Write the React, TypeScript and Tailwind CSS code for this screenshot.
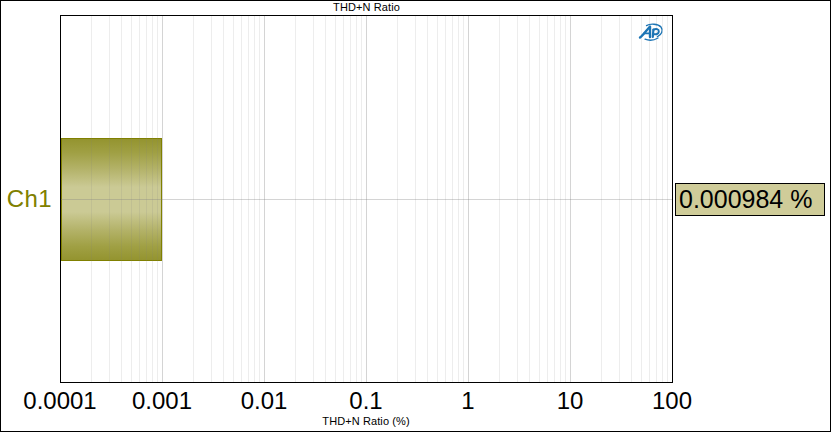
const multipliers = [2, 3, 4, 5, 6, 7, 8, 9];
const decades = [0, 1, 2, 3, 4, 5];
const ticks = ["0.0001", "0.001", "0.01", "0.1", "1", "10", "100"];

function Logo() {
  return (
    <svg className="absolute left-[577px] top-[7px]" width="26" height="19" viewBox="0 0 26 19" fill="none">
      <g stroke="#1c74b4" strokeLinecap="round" strokeLinejoin="round">
        <path d="M2 14.5 C5.5 12 8.5 7 12 3.5 L12 14" strokeWidth="2.4" />
        <path d="M6 10.4 L12 10.4" strokeWidth="1.6" />
        <path d="M15.4 6.5 L14.8 14" strokeWidth="2.2" />
        <path d="M15.4 6.8 C18 5.2 21 6 20.8 8.6 C20.6 11 18 11.8 15.4 11" strokeWidth="2" />
        <path d="M8.5 2.6 C12 0.5 20 0.6 23 4 C25.5 7.5 23.5 12 19.5 13.6" strokeWidth="1.3" />
        <path d="M7 16.2 C11 17.8 16 17.4 20 15" strokeWidth="1.3" />
      </g>
    </svg>
  );
}

function Chart() {
  return (
    <svg className="block" width="611" height="366" viewBox="61 16 611 366">
      <defs>
        <linearGradient id="bar" x1="0" y1="0" x2="0" y2="1">
          <stop offset="0" stopColor="#93932e" />
          <stop offset="0.12" stopColor="#a0a044" />
          <stop offset="0.25" stopColor="#b3b268" />
          <stop offset="0.4" stopColor="#cbca95" />
          <stop offset="0.6" stopColor="#cbca95" />
          <stop offset="0.75" stopColor="#b3b268" />
          <stop offset="0.88" stopColor="#a0a044" />
          <stop offset="1" stopColor="#93932e" />
        </linearGradient>
      </defs>
      <rect x="61" y="138" width="101" height="123" fill="url(#bar)" />
      <rect x="61.5" y="138.5" width="100" height="122" fill="none" stroke="#808000" />
      {decades.map((d) =>
        multipliers.map((m) => (
          <rect
            key={`${d}-${m}`}
            x={Math.floor(60.5 + 102 * (d + Math.log10(m)))}
            y="16"
            width="1"
            height="366"
            fill="#808080"
            fillOpacity="0.14"
          />
        ))
      )}
      {decades.slice(0, 5).map((d) => (
        <rect key={d} x={162 + 102 * d} y="16" width="1" height="366" fill="#808080" fillOpacity="0.34" />
      ))}
      <rect x="61" y="199" width="611" height="1" fill="#808080" fillOpacity="0.34" />
    </svg>
  );
}

export default function App() {
  return (
    <div className="w-[831px] h-[432px] box-border border border-black bg-white grid grid-cols-[59px_613px_157px] grid-rows-[14px_368px_48px] font-['Liberation_Sans',Arial,sans-serif] text-black overflow-hidden">
      <div />
      <div className="text-center text-[11px] leading-[12px] tracking-[0.1px]">THD+N Ratio</div>
      <div />

      <div className="flex items-center justify-end pr-[8px] text-[24px] tracking-[0.4px] leading-none text-[#808000]">Ch1</div>
      <div className="relative border border-black">
        <Chart />
        <Logo />
      </div>
      <div className="flex items-center pl-[2px]">
        <div className="w-[150px] h-[33px] box-border border border-black bg-[#cfcc99] pl-[3px] flex items-center text-[25px] leading-none">
          0.000984 %
        </div>
      </div>

      <div />
      <div className="flex flex-col">
        <div className="flex w-[714px] -ml-[51px] pt-[4px] text-[24px] leading-[28px]">
          {ticks.map((t) => (
            <div key={t} className="w-[102px] text-center shrink-0">
              {t}
            </div>
          ))}
        </div>
        <div className="text-center text-[11px] leading-[12px] tracking-[0.1px] pr-[1px]">THD+N Ratio (%)</div>
      </div>
      <div />
    </div>
  );
}
